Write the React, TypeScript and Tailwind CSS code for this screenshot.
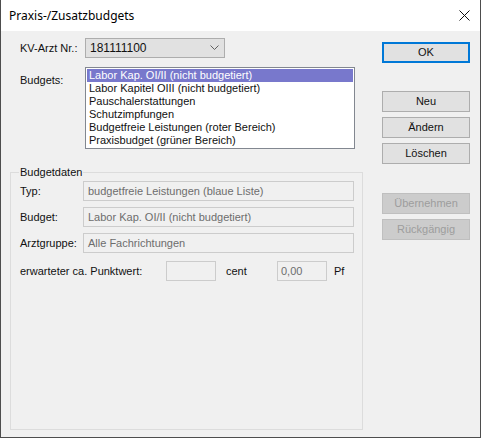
import React from "react";

const listItems = [
  "Labor Kap. OI/II (nicht budgetiert)",
  "Labor Kapitel OIII (nicht budgetiert)",
  "Pauschalerstattungen",
  "Schutzimpfungen",
  "Budgetfreie Leistungen (roter Bereich)",
  "Praxisbudget (grüner Bereich)",
];

function Btn({ label, mt, primary, disabled }: { label: string; mt: string; primary?: boolean; disabled?: boolean }) {
  const base = "w-[88px] h-[21px] flex items-center justify-center text-[11px] leading-none " + mt;
  if (primary)
    return <div className={base + " border-2 border-[#0078d7] bg-[#e1e1e1] text-[#111]"}>{label}</div>;
  if (disabled)
    return <div className={base + " border border-[#bfbfbf] bg-[#cccccc] text-[#9d9d9d]"}>{label}</div>;
  return <div className={base + " border border-[#adadad] bg-[#e1e1e1] text-[#111]"}>{label}</div>;
}

function Field({ label, value }: { label: string; value: string }) {
  return (
    <div className="flex items-center h-[20px]">
      <div className="w-[63px]">{label}</div>
      <div className="w-[271px] h-[20px] border border-[#cccccc] flex items-center pl-[4px] text-[#6d6d6d]">{value}</div>
    </div>
  );
}

export default function App() {
  return (
    <div
      className="w-[481px] h-[438px] flex flex-col border-l border-r border-b border-[#4d4d4d] bg-[#f0f0f0] text-[11px] text-[#111]"
      style={{ fontFamily: '"Liberation Sans", Arial, sans-serif' }}
    >
      <div className="h-[31px] bg-white flex items-center justify-between pl-[8px] pr-[10px] shrink-0">
        <span className="text-[12px] text-black" style={{ fontFamily: '"Noto Sans", "Liberation Sans", sans-serif' }}>
          Praxis-/Zusatzbudgets
        </span>
        <svg width="11" height="11" viewBox="0 0 11 11" className="mt-[-1px]">
          <path d="M0.5 0.5 L10.5 10.5 M10.5 0.5 L0.5 10.5" stroke="#111" strokeWidth="1" fill="none" />
        </svg>
      </div>
      <div className="flex flex-1">
        <div className="w-[380px] flex flex-col">
          <div className="flex items-center h-[20px] mt-[7px] pl-[19px]">
            <div className="w-[65px]">KV-Arzt Nr.:</div>
            <div className="w-[140px] h-[20px] border border-[#adadad] bg-[#e1e1e1] flex items-center justify-between pl-[4px] pr-[5px] text-[12px]">
              <span>181111100</span>
              <svg width="9" height="6" viewBox="0 0 9 6">
                <path d="M0.5 0.5 L4.5 4.5 L8.5 0.5" stroke="#606060" strokeWidth="1" fill="none" />
              </svg>
            </div>
          </div>
          <div className="flex mt-[9px] pl-[19px]">
            <div className="w-[65px] pt-[5px]">Budgets:</div>
            <div className="w-[270px] h-[82px] border border-[#828790] bg-white p-[1px] flex flex-col">
              {listItems.map((t, i) => (
                <div
                  key={t}
                  className={
                    "h-[13px] leading-[13px] pl-[2px] whitespace-nowrap " +
                    (i === 0 ? "bg-[#7878cc] text-white" : "text-[#111]")
                  }
                >
                  {t}
                </div>
              ))}
            </div>
          </div>
          <div className="relative ml-[9px] mt-[23px] w-[353px] h-[258px] border border-[#dcdcdc] flex flex-col pl-[9px]">
            <div className="absolute left-[8px] top-[-8px] px-[1px] bg-[#f0f0f0] leading-[14px]">Budgetdaten</div>
            <div className="mt-[8px] flex flex-col gap-[6px]">
              <Field label="Typ:" value="budgetfreie Leistungen (blaue Liste)" />
              <Field label="Budget:" value="Labor Kap. OI/II (nicht budgetiert)" />
              <Field label="Arztgruppe:" value="Alle Fachrichtungen" />
            </div>
            <div className="flex items-center h-[20px] mt-[8px]">
              <div className="w-[146px]">erwarteter ca. Punktwert:</div>
              <div className="w-[50px] h-[20px] border border-[#cccccc]"></div>
              <div className="w-[61px] pl-[10px]">cent</div>
              <div className="w-[50px] h-[20px] border border-[#cccccc] flex items-center pl-[3px] text-[#6d6d6d]">0,00</div>
              <div className="pl-[7px]">Pf</div>
            </div>
          </div>
        </div>
        <div className="flex flex-col pl-[1px]">
          <Btn label="OK" mt="mt-[11px]" primary />
          <Btn label="Neu" mt="mt-[28px]" />
          <Btn label="Ändern" mt="mt-[5px]" />
          <Btn label="Löschen" mt="mt-[5px]" />
          <Btn label="Übernehmen" mt="mt-[29px]" disabled />
          <Btn label="Rückgängig" mt="mt-[5px]" disabled />
        </div>
      </div>
    </div>
  );
}
